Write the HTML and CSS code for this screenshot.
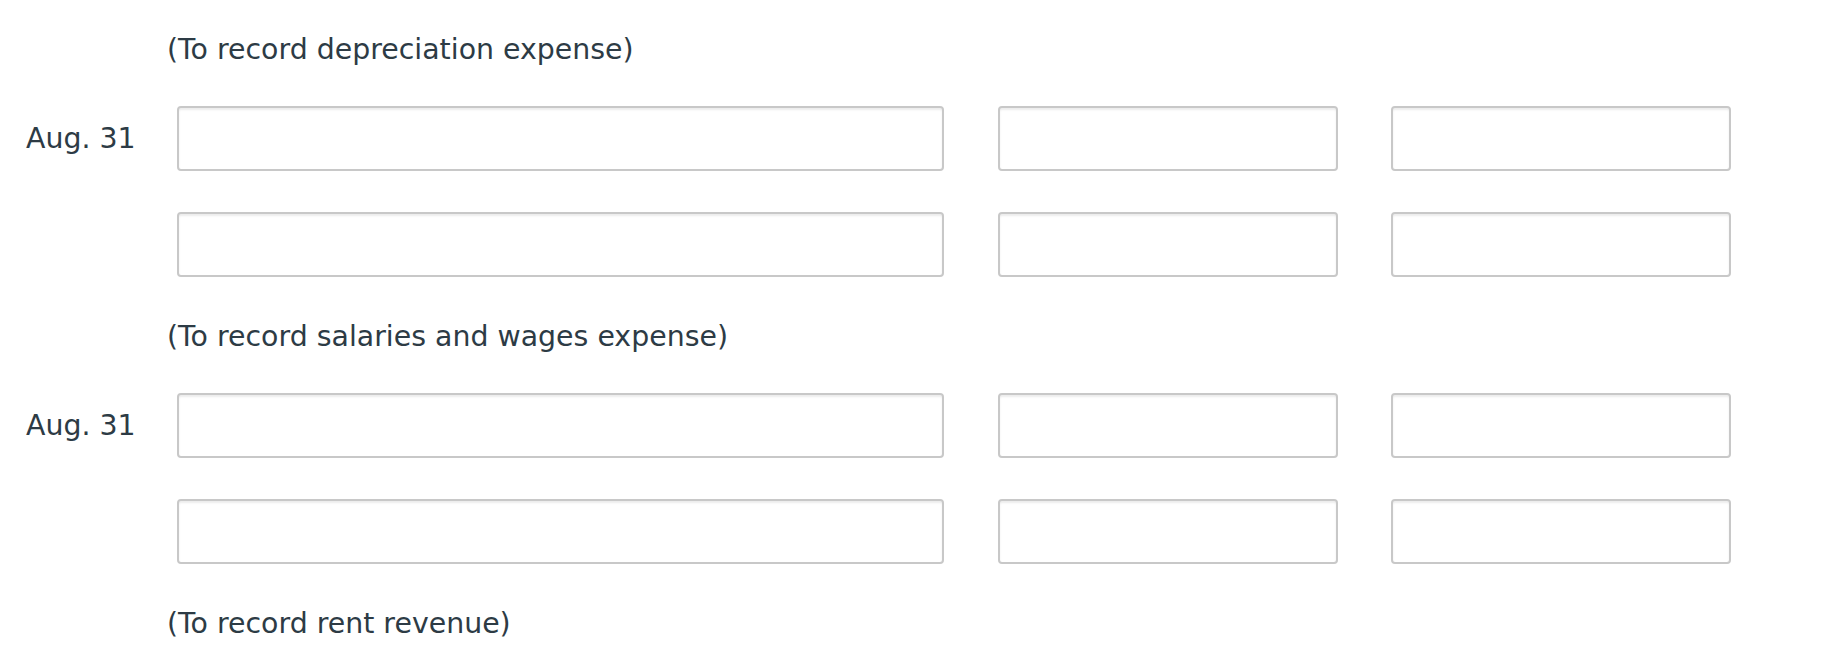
FILE: index.html
```html
<!DOCTYPE html>
<html lang="en">
<head>
<meta charset="utf-8">
<title>Journal entries</title>
<link rel="stylesheet" href="styles.css">
</head>
<body>
<div class="page">
  <div class="memo">(To record depreciation expense)</div>
  <div class="entry">
    <div class="row">
      <div class="date">Aug. 31</div>
      <input class="field account" type="text">
      <input class="field amount" type="text">
      <input class="field amount" type="text">
    </div>
    <div class="row">
      <div class="date"></div>
      <input class="field account" type="text">
      <input class="field amount" type="text">
      <input class="field amount" type="text">
    </div>
  </div>
  <div class="memo">(To record salaries and wages expense)</div>
  <div class="entry">
    <div class="row">
      <div class="date">Aug. 31</div>
      <input class="field account" type="text">
      <input class="field amount" type="text">
      <input class="field amount" type="text">
    </div>
    <div class="row">
      <div class="date"></div>
      <input class="field account" type="text">
      <input class="field amount" type="text">
      <input class="field amount" type="text">
    </div>
  </div>
  <div class="memo">(To record rent revenue)</div>
</div>
</body>
</html>
```
FILE: styles.css
```css
html, body {
  margin: 0;
  padding: 0;
  background: #ffffff;
}

body {
  font-family: "DejaVu Sans", Verdana, sans-serif;
  font-size: 28.4px;
  color: #2d3b45;
}

.page {
  padding-top: 30px;
}

.memo {
  height: 40px;
  line-height: 40px;
  padding-left: 167px;
  white-space: nowrap;
}

.entry {
  display: flex;
  flex-direction: column;
  gap: 41px;
  margin: 36px 0 40px;
}

.row {
  display: grid;
  grid-template-columns: 123.5px 767px 340px 340px;
  column-gap: 53.5px;
  align-items: center;
}

.date {
  padding-left: 26px;
  line-height: 40px;
  white-space: nowrap;
}

.field {
  box-sizing: border-box;
  height: 65px;
  margin: 0;
  padding: 0 12px;
  border: 2px solid #c8c8c8;
  border-radius: 4px;
  background: #ffffff;
  box-shadow: inset 0 2px 2px rgba(0, 0, 0, 0.075);
  font: inherit;
  color: inherit;
  outline: none;
}
```
